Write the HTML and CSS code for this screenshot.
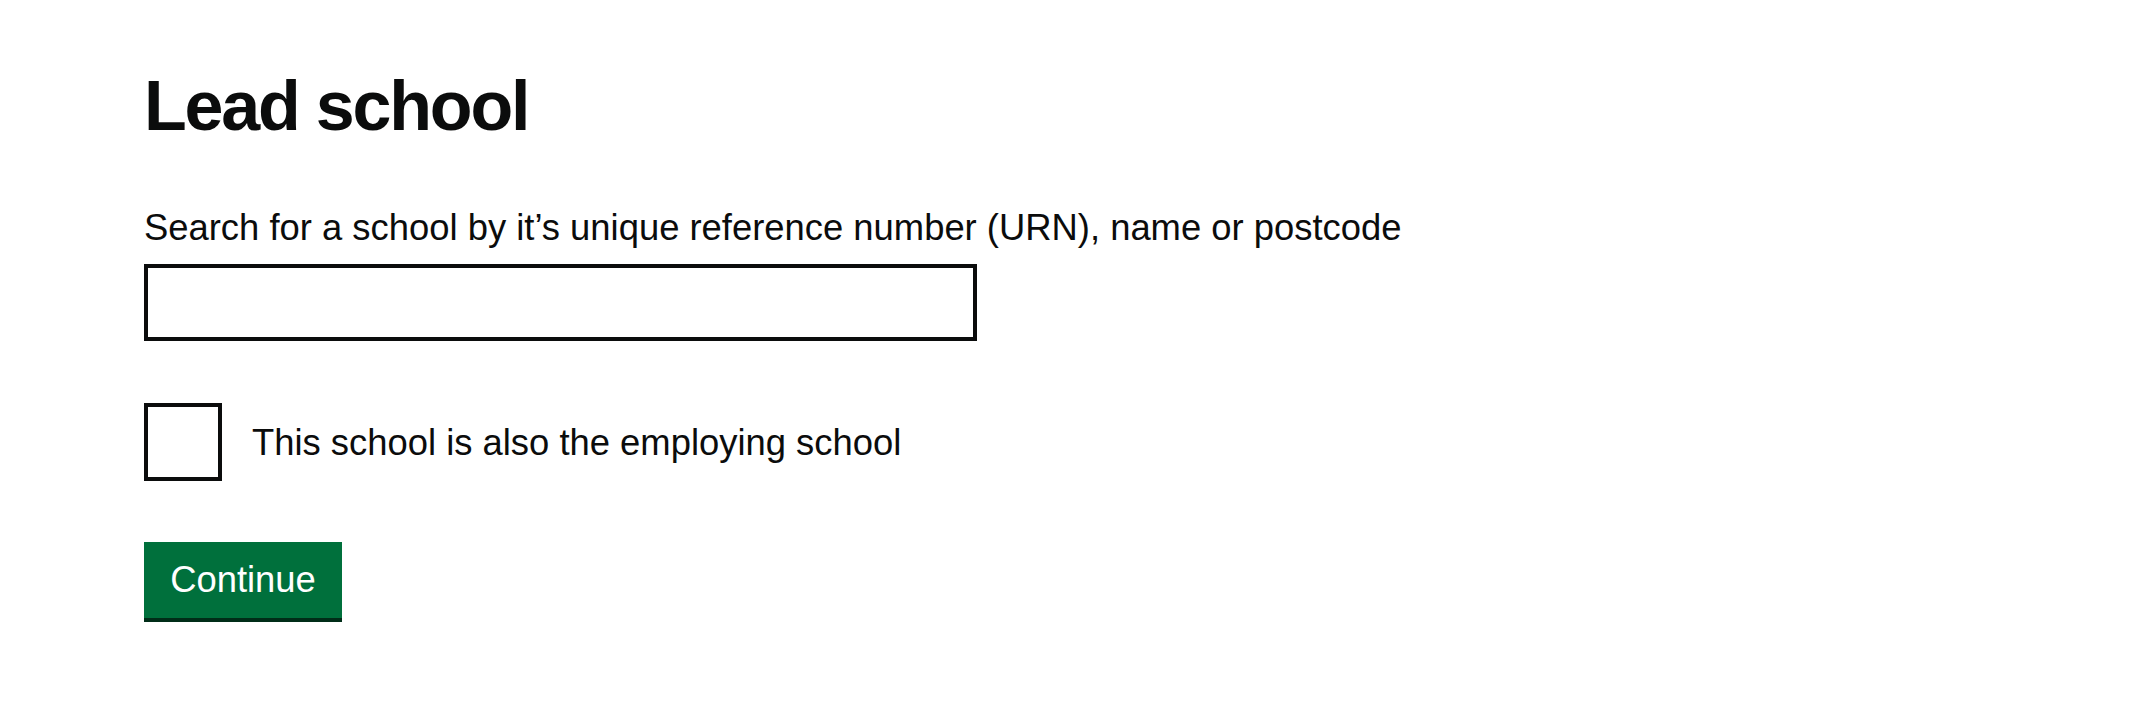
FILE: index.html
```html
<!DOCTYPE html>
<html lang="en">
<head>
  <meta charset="UTF-8">
  <title>Lead school</title>
  <link rel="stylesheet" href="styles.css">
</head>
<body>
  <main class="page">
    <form class="school-form">
      <h1 class="heading">Lead school</h1>

      <div class="field">
        <label class="field__label" for="school-search">Search for a school by it’s unique reference number (URN), name or postcode</label>
        <input class="field__input" id="school-search" name="school" type="text">
      </div>

      <div class="checkbox">
        <input class="checkbox__input" id="employing" type="checkbox">
        <label class="checkbox__label" for="employing">This school is also the employing school</label>
      </div>

      <button class="button" type="submit">Continue</button>
    </form>
  </main>
</body>
</html>
```

FILE: styles.css
```css
html {
  box-sizing: border-box;
  background: #fff;
}

*, *:before, *:after {
  box-sizing: inherit;
}

body {
  margin: 0;
  color: #0b0c0c;
  font-family: "Liberation Sans", Arial, sans-serif;
}

.page {
  padding: 71px 144px 0;
}

.school-form {
  display: flex;
  flex-direction: column;
  align-items: flex-start;
}

.heading {
  margin: 0 0 67px;
  font-size: 70px;
  line-height: 70px;
  font-weight: 700;
  letter-spacing: -2.2px;
}

.field {
  display: flex;
  flex-direction: column;
  margin-bottom: 62px;
}

.field__label {
  font-size: 36.4px;
  line-height: 40px;
  margin-bottom: 16px;
}

.field__input {
  width: 833px;
  height: 77px;
  margin: 0;
  border: 4px solid #0b0c0c;
  border-radius: 0;
  padding: 0 10px;
  font-size: 36px;
  font-family: inherit;
  background: #fff;
}

.checkbox {
  display: flex;
  align-items: center;
  gap: 30px;
  margin-bottom: 61px;
}

.checkbox__input {
  appearance: none;
  -webkit-appearance: none;
  width: 78px;
  height: 78px;
  margin: 0;
  border: 4px solid #0b0c0c;
  background: #fff;
}

.checkbox__label {
  font-size: 36.4px;
  line-height: 40px;
  padding-top: 2px;
}

.button {
  width: 198px;
  height: 76px;
  margin: 0 0 4px;
  padding: 0;
  border: 0;
  border-radius: 0;
  background: #00703c;
  box-shadow: 0 4px 0 #002d18;
  color: #fff;
  font-family: inherit;
  font-size: 36.4px;
  line-height: 36px;
  cursor: pointer;
}
```
